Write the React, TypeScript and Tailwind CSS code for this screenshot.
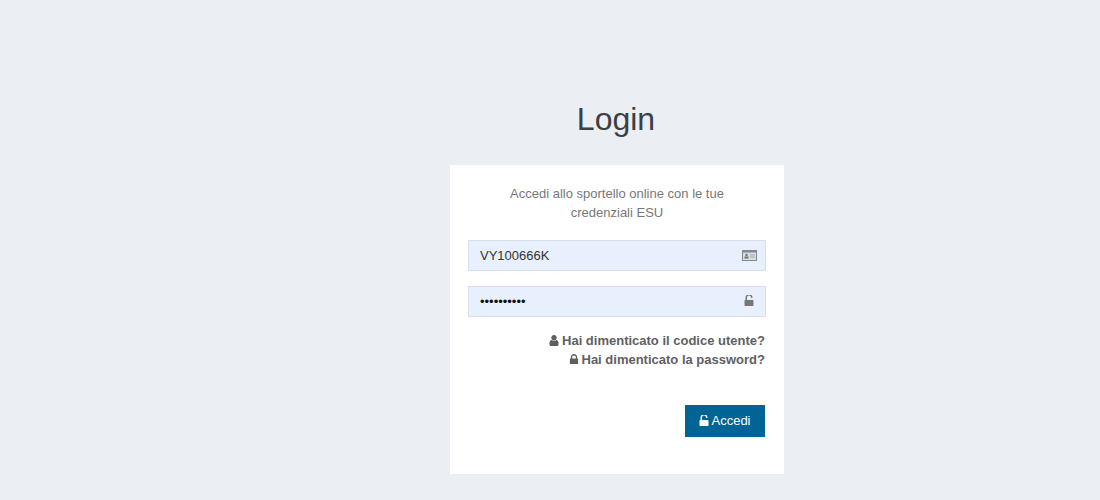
const userPath =
  "M1536 1399q0 109-62.5 187t-150.5 78h-854q-88 0-150.5-78t-62.5-187q0-85 8.5-160.5t31.5-152 58.5-131 94-89 134.5-34.5q131 128 313 128t313-128q76 0 134.5 34.5t94 89 58.5 131 31.5 152 8.5 160.5zm-256-887q0 159-112.5 271.5t-271.5 112.5-271.5-112.5-112.5-271.5 112.5-271.5 271.5-112.5 271.5 112.5 112.5 271.5z";
const lockPath =
  "M640 768h512v-192q0-106-75-181t-181-75-181 75-75 181v192zm832 96v576q0 40-28 68t-68 28h-960q-40 0-68-28t-28-68v-576q0-40 28-68t68-28h32v-192q0-184 132-316t316-132 316 132 132 316v192h32q40 0 68 28t28 68z";
const unlockPath =
  "M1376 768q40 0 68 28t28 68v576q0 40-28 68t-68 28h-960q-40 0-68-28t-28-68v-576q0-40 28-68t68-28h32v-320q0-185 131.5-316.5t316.5-131.5 316.5 131.5 131.5 316.5q0 26-19 45t-45 19h-64q-26 0-45-19t-19-45q0-106-75-181t-181-75-181 75-75 181v320h736z";

function Glyph({ d, className }: { d: string; className: string }) {
  return (
    <svg viewBox="256 128 1280 1536" className={className} fill="currentColor" aria-hidden>
      <path d={d} />
    </svg>
  );
}

function IdCard({ className }: { className: string }) {
  return (
    <svg viewBox="0 0 15 11" className={className} aria-hidden>
      <rect x="0.5" y="0.5" width="14" height="10" fill="#d9dde4" stroke="#85888c" />
      <rect x="0.5" y="0.5" width="14" height="2" fill="#85888c" />
      <circle cx="4.5" cy="5" r="1.2" fill="#6f7276" />
      <rect x="2.5" y="6.5" width="4" height="2" fill="#6f7276" />
      <rect x="8" y="4.5" width="5" height="1" fill="#a5a9ae" />
      <rect x="8" y="6.5" width="5" height="1" fill="#a5a9ae" />
    </svg>
  );
}

export default function App() {
  return (
    <div className="h-[500px] w-[1100px] overflow-hidden bg-[#ebeef3] font-['Liberation_Sans',Arial,sans-serif]">
      <div className="ml-[450px] w-[334px] pt-[99px]">
        <h1 className="pr-[2px] text-center text-[32px] leading-[40px] text-[#3a3f44]">Login</h1>
        <div className="mt-[26px] h-[309px] bg-white px-[18px] pt-[19px]">
          <p className="mx-auto w-[260px] text-center text-[13px] leading-[19px] text-[#777777]">
            Accedi allo sportello online con le tue credenziali ESU
          </p>
          <div className="mt-[18px] flex flex-col gap-[15px]">
            <div className="relative">
              <input
                readOnly
                value="VY100666K"
                className="block h-[31px] w-[298px] border border-[#d8deea] bg-[#e8f0fe] pl-[11px] pr-[36px] text-[13px] text-[#333333] outline-none"
              />
              <IdCard className="absolute right-[9px] top-[10px] h-[11px] w-[15px]" />
            </div>
            <div className="relative">
              <input
                readOnly
                type="password"
                value="1234567890"
                className="block h-[31px] w-[298px] border border-[#d8deea] bg-[#e8f0fe] pl-[11px] pr-[36px] text-[13px] text-[#111111] outline-none"
              />
              <Glyph d={unlockPath} className="absolute right-[12px] top-[9px] h-[12px] w-[10px] text-[#777777]" />
            </div>
          </div>
          <div className="mt-[14px] flex flex-col items-end pr-px text-[13px] font-bold leading-[19px] text-[#5f5f5f]">
            <a className="flex items-center gap-[3px]">
              <Glyph d={userPath} className="h-[11px] w-[10px]" />
              Hai dimenticato il codice utente?
            </a>
            <a className="flex items-center gap-[3px]">
              <Glyph d={lockPath} className="h-[11px] w-[10px]" />
              Hai dimenticato la password?
            </a>
          </div>
          <div className="mt-[36px] flex justify-end pr-px">
            <button className="flex h-[32px] w-[80px] items-center justify-center gap-[2px] bg-[#006494] text-[13px] text-white">
              <Glyph d={unlockPath} className="h-[12px] w-[10px]" />
              Accedi
            </button>
          </div>
        </div>
      </div>
    </div>
  );
}
